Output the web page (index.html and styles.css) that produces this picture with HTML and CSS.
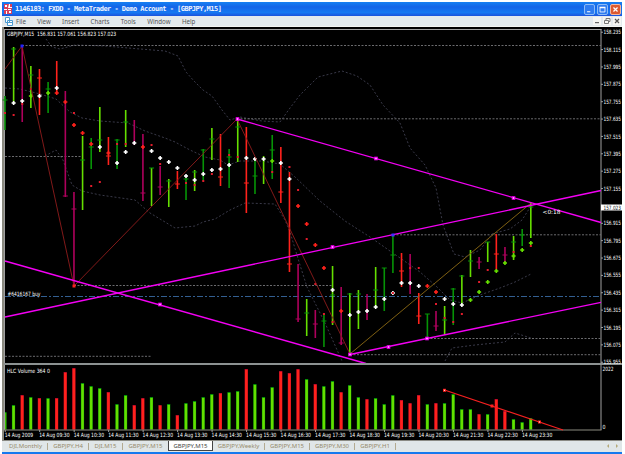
FILE: index.html
```html
<!DOCTYPE html>
<html lang="en">
<head>
    <meta charset="UTF-8">
    <title>MetaTrader</title>
    <link rel="stylesheet" href="styles.css">
</head>
<body>
    <div class="window">
        <div class="titlebar">
            <svg class="app-icon" viewBox="0 0 8 10"><path fill="#d8405c" d="M0 0h8v10H0z"/><path fill="#fff" d="M1 1h2v2H1zM5 0h1v3h2v1H4zM0 5h3v1H0zM4 5h3v1H4zM2 7h1v3H2zM5 7h2v2H5z"/></svg>
            <span class="title">1146183: FXDD - MetaTrader - Demo Account - [GBPJPY,M15]</span>
            <div class="controls">
                <svg class="ctl" viewBox="0 0 11 11"><path fill="#fff" d="M2.500 7.500h4v1.500h-4z"/></svg>
                <svg class="ctl" viewBox="0 0 11 11"><path fill="none" stroke="#fff" d="M2.500 3v5.500h6V3"/><path fill="#fff" d="M2 2h7v2H2z"/></svg>
                <svg class="ctl close" viewBox="0 0 11 11"><path stroke="#fff" stroke-width="1.500" d="M3 3l5 5M8 3l-5 5"/></svg>
            </div>
        </div>
        <div class="menubar">
            <svg class="doc-icon" viewBox="0 0 8 9"><path fill="#fff" stroke="#4c9bd0" d="M.5.5h4v5h-4zM2.500 3.500h5v5h-5z"/><path stroke="#4c9bd0" d="M3 5.500h4"/></svg>
            <nav class="menu">
                <span>File</span><span>View</span><span>Insert</span><span>Charts</span><span>Tools</span><span>Window</span><span>Help</span>
            </nav>
            <div class="doc-controls">
                <svg viewBox="0 0 8 8"><path fill="#666" d="M2 5h4v1.200H2z"/></svg>
                <svg viewBox="0 0 8 8"><path fill="none" stroke="#777" d="M3 3V1.500h4v3H5.500M1.500 3.500h4v3h-4z"/></svg>
                <svg viewBox="0 0 8 8"><path stroke="#555" stroke-width="1.200" d="M2 2l4 4M6 2L2 6"/></svg>
            </div>
        </div>
        <svg class="chart" id="chart" viewBox="2 27 620 413"></svg>
        <div class="tabs">
            <span class="tab w1">DJI,Monthly</span>
            <span class="tab w2">GBPJPY,H4</span>
            <span class="tab w3">DJI,M15</span>
            <span class="tab w4 last">GBPJPY,M15</span>
            <span class="tab active">GBPJPY,M15</span>
            <span class="tab w5">GBPJPY,Weekly</span>
            <span class="tab w6">GBPJPY,M15</span>
            <span class="tab w6">GBPJPY,M30</span>
            <span class="tab w7">GBPJPY,H1</span>
            <svg class="arrows" viewBox="0 0 14 6"><path fill="#b3a878" d="M3 1v4L1 3zM10 1v4l2-2z"/></svg>
        </div>
    </div>
    <script src="chart.js"></script>
</body>
</html>
```
FILE: styles.css
```css
* { box-sizing: border-box; }
body { margin: 0; background: #fff; font-family: "Noto Sans", "DejaVu Sans", sans-serif; overflow: hidden; }
.window { width: 620px; height: 452px; margin: 2px 0 0 2px; display: flex; flex-direction: column; background: #000; border-bottom: 2px solid #1679ee; }

.titlebar { height: 14px; flex: none; display: flex; align-items: center; padding: 0 1px 0 2px; background: linear-gradient(#1680f2, #1565e8 35%, #1578f2 75%, #1b52dc); }
.app-icon { width: 8px; height: 10px; margin-right: 3px; }
.title { font: bold 7px "DejaVu Sans Mono", monospace; width: 208px; color: #eef4ff; white-space: nowrap; letter-spacing: -0.53px; }
.controls { margin-left: auto; display: flex; gap: 2px; }
.ctl { width: 11px; height: 11px; background: #2f7cf0; border: 1px solid #8dbcf6; border-radius: 2px; }
.close { background: #dc5a30; border-color: #f0b8a0; }

.menubar { height: 11px; flex: none; display: flex; align-items: center; padding: 0 1px 0 3px; background: #e4eaed; border-bottom: 1px solid #f4f5f2; }
.doc-icon { width: 8px; height: 9px; margin-right: 3px; }
.menu { display: flex; gap: 11.3px; font-size: 6.2px; line-height: 9px; color: #555; }
.doc-controls { margin-left: auto; display: flex; gap: 2px; }
.doc-controls svg { width: 8px; height: 8px; background: #f6f6f3; }

.chart { width: 620px; height: 413px; flex: none; display: block; }
.chart text { font-family: "DejaVu Sans Condensed", "DejaVu Sans", sans-serif; font-size: 5.8px; fill: #fff; }
.band { fill: none; stroke: #48485a; stroke-dasharray: 2 2; stroke-width: .8; }
.level { stroke: #77777a; stroke-dasharray: 2 1.500; stroke-width: .9; }
.buy { stroke: #335f91; stroke-dasharray: 6 2 2 2; }
.zigzag { fill: none; stroke: #8e1c1c; stroke-width: .9; }
.gold { stroke: #8c6a14; }
.trend { stroke: #f400f4; stroke-width: 1.300; }
.voltrend { stroke: #f42020; stroke-width: 1.300; }

.tabs { height: 12px; flex: none; display: flex; background: #e0e6e8; border-top: 1px solid #8a8a84; font-size: 6px; color: #968b6c; }
.tab { flex: none; white-space: nowrap; border-right: 1px solid #b3aa91; height: 7px; margin-top: 2px; line-height: 7px; text-align: center; }
.w1 { width: 44px; margin-left: 2px; }
.w2 { width: 41px; }
.w3 { width: 34px; }
.w4 { width: 45px; }
.last { border: none; }
.active { width: 45px; height: 10px; margin-top: 0; line-height: 10px; background: #fff; color: #444; border: 1px solid #444; border-top: none; }
.w5 { width: 52px; }
.w6 { width: 45px; }
.w7 { width: 41px; }
.arrows { width: 14px; height: 6px; margin: 2px 2px 0 auto; }
```
FILE: chart.js
```js
const chart = document.getElementById("chart");
const LIME = "#65df00", GREEN = "#069306", RED = "#ff221c", MAG = "#ae005c", WHITE = "#fff";
const colors = { l: LIME, g: GREEN, r: RED, m: MAG, w: WHITE };

function add(tag, attrs, text) {
    const el = document.createElementNS("http://www.w3.org/2000/svg", tag);
    for (const k in attrs) el.setAttribute(k, attrs[k]);
    if (text) el.textContent = text;
    chart.appendChild(el);
    return el;
}
function line(x1, y1, x2, y2, cls) { add("line", { x1, y1, x2, y2, class: cls }); }
function rect(x, y, width, height, fill) { add("rect", { x, y, width, height, fill }); }
// text squeezed to a given width
function label(x, y, text, width, fill) {
    const el = add("text", fill ? { style: "fill:" + fill } : {}, text);
    const scale = width / el.getComputedTextLength();
    el.setAttribute("transform", `translate(${x} ${y}) scale(${scale} 1)`);
}
const barX = i => 5 + i * 8.62;

// colour, high, low, close, then the dots drawn over the bar
const bars = [
    "g 96 130 100 s113", "l 47 104 49 w103 s115", "m 47 122 0 w101 s104", "l 66 108 75 s89 l96", "r 69 115 78 w96",
    "g 82 113 89 l93", "r 61 93 0 w88 r93", "m 91 197 196 r102", "m 192 286 209 r125 s113", "l 136 210 160 r133",
    "g 138 169 147 r144 s186", "l 107 152 140 w147 s182", "r 137 165 156 r153", "g 139 169 140 s144 w163", "l 110 147 122 w152 s144",
    "m 120 145 0 w143", "m 134 201 193 r147", "l 168 206 168 w151 s145", "m 166 195 187 w158 s164", "l 179 207 181 w162",
    "r 171 189 184 w168", "g 178 200 179 w176 s183", "l 170 191 172 w180 s185", "g 149 181 150 w174 s181", "l 128 160 139 w170 s174",
    "r 134 186 177 w169", "g 149 188 157 w165 s155", "l 119 162 127 s157", "r 127 213 183 w158", "g 158 194 176 w159",
    "l 156 184 0 w159", "g 135 179 150 l161 s172", "r 147 203 192 w163", "r 172 272 264 w179 s167", "m 264 322 319 r206 s190",
    "l 299 336 313 r224 s239", "m 310 338 324 r245 s284", "g 313 347 321 r268 s314", "l 266 325 295 w290 s322", "m 287 345 343 r311",
    "l 293 353 294 w315", "l 290 329 294 w312", "m 294 320 0 w311", "l 267 308 290 w307", "g 268 311 268 w299",
    "g 235 273 255 w293 s293", "r 253 287 271 w283", "m 254 294 0 s268 w283", "r 293 324 316 w286 s268", "g 314 338 314 r286",
    "m 311 331 326 r292 s304", "l 306 335 320 w299 s318", "g 288 325 289 w304 s322", "l 275 304 276 w305 s314", "l 250 277 261 l300",
    "m 257 269 262 l292 s282", "l 242 262 242 l282 s270", "r 234 270 254 l271", "m 247 263 255 l263", "l 236 260 242 l256 s252",
    "g 229 246 235 l250", "l 203 238 207 l243 s246"
];
const volumes = "g412 g405 r395 g397 r398 g398 r398 r372 r368 g383 g386 g388 r392 g404 g395 r405 r398 g397 r405 g404 r415 g403 g401 g397 g394 r393 g392 g391 r369 g384 g397 g387 r371 r373 r369 g379 r384 g386 g381 r392 g385 g397 r399 g398 g404 g395 r400 r403 r395 g404 r403 g403 g394 g409 g409 r414 g414 r399 r411 g419 g422 g418".split(" ");

const bands = [
    "46,39 52,47 60,49 75,45 105,46 140,49 165,51 178,56 186,72 194,81 203,90 212,96 222,110 230,120 240,117 262,121 280,122 290,108 300,95 318,77 330,74 342,71 357,76 370,85 383,105 400,123 410,148 425,165 436,188 443,225 454,254 465,257 480,250 492,234 510,229 522,220 531,206",
    "5,88 20,89 40,94 56,99 70,112 82,118 100,121 128,123 145,131 165,138 175,142 190,150 205,157 220,160 228,165 240,161 262,161 280,164 295,177 320,201 345,221 370,237 390,251 403,260 420,272 436,286 450,300 462,303 480,295 500,288 515,282 531,274",
    "45,156 56,150 63,160 72,185 82,191 100,195 135,200 150,213 175,228 195,226 203,222 215,219 230,210 245,203 275,204 285,220 290,232 300,265 307,287 325,323 342,361",
    "445,361 452,348 475,345 505,342 515,333 531,338"
];

// background and frame
rect(2, 27, 620, 413, "#000");
rect(2, 27, 2, 413, "#8b8a80");
rect(4, 29, 597.5, 1, "#a0a0a0");
rect(4, 29, 1, 401, "#a0a0a0");
rect(600.5, 29, 1, 401, "#a0a0a0");

bands.forEach(points => add("polyline", { points, class: "band" }));
[[22, 45.5, 601], [237, 118.8, 601], [5, 156.5, 82], [393, 234.8, 601], [74, 285.5, 332], [5, 356.3, 152], [427, 338.5, 601], [350, 354.7, 601]]
    .forEach(l => line(l[0], l[1], l[2], l[1], "level"));
line(5, 296.5, 600, 296.5, "buy");

bars.forEach((b, i) => {
    const [c, high, low, close, ...dots] = b.split(" ");
    const x = barX(i), fill = colors[c];
    rect(x - .8, +high, 1.6, low - high, fill);
    if (+close) rect(x - 2.5, close - .5, 5, 1, c == "l" ? GREEN : fill);
    dots.forEach(d => {
        const y = +d.slice(1);
        if (d[0] == "s") return rect(x - 1, y - 1, 2, 2, "#e01c2c");
        const color = colors[d[0]];
        rect(x - 2, y - .8, 4, 1.6, color);
        rect(x - .8, y - 2, 1.6, 4, color);
    });
});

add("polyline", { points: "5,69 22,46 74,286 237,119 350,354", class: "zigzag" });
line(350, 354, 531, 203, "zigzag gold");
line(5, 261, 366, 363.5, "trend");
line(5, 317, 601, 190.5, "trend");
line(237, 119, 601, 222.5, "trend");
line(350, 354.5, 601, 302.3, "trend");
[[376, 158.5], [513.5, 198], [332.5, 247], [160, 304.5], [350, 354.5], [388.5, 347], [427, 338.5], [237.5, 119]].forEach(([x, y]) => {
    rect(x - 1.8, y - 1.8, 3.6, 3.6, "#f400f4");
    rect(x - .6, y - .6, 1.2, 1.2, "#fff");
});
rect(20.5, 44.5, 3, 3, "#2222ff");
rect(391.5, 233.5, 3, 3, "#3a30ff");
rect(72.5, 284.5, 3, 3, "#ff2020");

// volume pane
rect(4, 363, 618, 2, "#8c9292");
volumes.forEach((v, i) => {
    const x = barX(i), y = +v.slice(1), green = v[0] == "g", left = i ? x - 1.7 : 5;
    rect(left, y, x + 1.5 - left, 429.5 - y, green ? GREEN : "#c40a28");
    rect(left + .4, y + 1, x + .8 - left, 428.5 - y, green ? LIME : RED);
});
rect(4, 429.5, 597.5, 1, "#8b8b80");
line(444.5, 390, 563, 430, "voltrend");
[[444.5, 390.3], [492, 406], [539.5, 422]].forEach(([x, y], i) => {
    rect(x - 1.5, y - 1.5, 3, 3, "#ff2020");
    if (i != 1) rect(x - .5, y - .5, 1, 1, "#fff");
});

// scales
for (let k = 0; k < 20; k++) {
    const y = 32.2 + k * 17.37;
    rect(601, y - .5, 2, 1, "#a0a0a0");
    if (k == 10) continue;
    label(603.5, y + 2.1, (158.235 - k * .12).toFixed(3), 17.5);
}
rect(601, 204.5, 21, 6, "#fff");
label(603.5, 209.7, "157.023", 17.5, "#111");
label(602.5, 371, "2022", 11);
label(602.5, 428.5, "0", 3);
for (let k = 0; k < 16; k++) {
    const x = 4.7 + k * 34.48;
    rect(x, 430, 1, 2, "#a0a0a0");
    const hour = String(8 + k).padStart(2, "0");
    label(x, 437.2, k ? "14 Aug " + hour + ":30" : "14 Aug 2009", k ? 30.5 : 28.5);
}
label(7, 36, "GBPJPY,M15\u00a0 156.831 157.061 156.823 157.023", 109.5);
label(7.5, 296, "#6416167 buy", 33);
label(7, 372.6, "HLC Volume 364 0", 43);
label(542.5, 214, "<0:18", 18);
```
